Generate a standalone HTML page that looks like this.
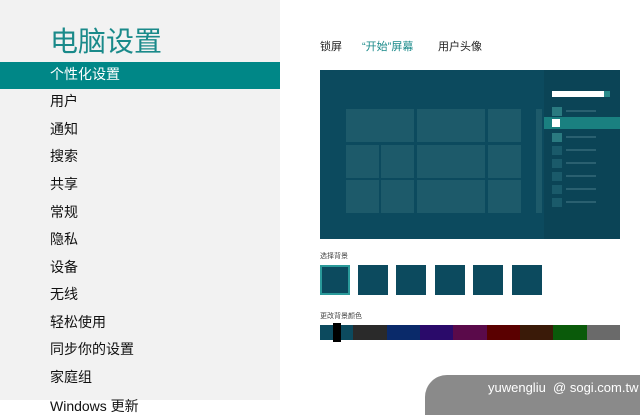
<!DOCTYPE html><html><head><meta charset="utf-8"><style>
body{margin:0;width:640px;height:400px;overflow:hidden;position:relative;background:#fff;font-family:"Liberation Sans","Noto Sans CJK SC",sans-serif}
.l{position:absolute;left:0;top:0;width:280px;height:400px;background:#f2f2f2}
.t{position:absolute;left:50px;top:20px;font-size:28px;color:#1a8a8a}
.sel{position:absolute;left:0;top:62px;width:280px;height:27px;background:#008787}
.i{position:absolute;left:50px;font-size:14px;color:#111;line-height:20px}
.a{position:absolute}
.tile{position:absolute;background:#1d5a6a}
.sq{position:absolute;left:232px;width:10px;height:9px;background:#1a5a6a}
.ln{position:absolute;left:246px;width:30px;height:2px;background:#2a6070}
</style></head><body>
<div class="l"></div>
<div class="t">电脑设置</div>
<div class="sel"></div>
<div class="i" style="top:64px;color:#fff">个性化设置</div>
<div class="i" style="top:91px">用户</div>
<div class="i" style="top:119px">通知</div>
<div class="i" style="top:146px">搜索</div>
<div class="i" style="top:174px">共享</div>
<div class="i" style="top:202px">常规</div>
<div class="i" style="top:229px">隐私</div>
<div class="i" style="top:257px">设备</div>
<div class="i" style="top:284px">无线</div>
<div class="i" style="top:312px">轻松使用</div>
<div class="i" style="top:339px">同步你的设置</div>
<div class="i" style="top:367px">家庭组</div>
<div class="i" style="top:396px">Windows 更新</div>
<div class="a" style="left:320px;top:38px;font-size:11px;color:#222">锁屏</div>
<div class="a" style="left:362px;top:38px;font-size:11px;color:#1a8a8a">“开始”屏幕</div>
<div class="a" style="left:438px;top:38px;font-size:11px;color:#222">用户头像</div>
<div class="a" style="left:320px;top:70px;width:300px;height:169px;background:#0c4a5e;overflow:hidden">
<div class="a" style="left:224px;top:0;width:76px;height:169px;background:#0b4456"></div>
<div class="a" style="left:232px;top:21px;width:52px;height:6px;background:#fff"></div>
<div class="a" style="left:284px;top:21px;width:6px;height:6px;background:#2a8a8a"></div>
<div class="sq" style="top:37px;background:#2a7a80"></div><div class="ln" style="top:40px"></div>
<div class="a" style="left:224px;top:47px;width:76px;height:12px;background:#1a8080"></div>
<div class="a" style="left:232px;top:49px;width:8px;height:8px;background:#fff"></div>
<div class="sq" style="top:63px;background:#2a7a80"></div><div class="ln" style="top:66px"></div>
<div class="sq" style="top:76px"></div><div class="ln" style="top:79px"></div>
<div class="sq" style="top:89px"></div><div class="ln" style="top:92px"></div>
<div class="sq" style="top:102px"></div><div class="ln" style="top:105px"></div>
<div class="sq" style="top:115px"></div><div class="ln" style="top:118px"></div>
<div class="sq" style="top:128px"></div><div class="ln" style="top:131px"></div>
<div class="tile" style="left:26px;top:39px;width:68px;height:33px"></div>
<div class="tile" style="left:97px;top:39px;width:68px;height:33px"></div>
<div class="tile" style="left:168px;top:39px;width:33px;height:33px"></div>
<div class="tile" style="left:26px;top:75px;width:33px;height:33px"></div>
<div class="tile" style="left:61px;top:75px;width:33px;height:33px"></div>
<div class="tile" style="left:97px;top:75px;width:68px;height:33px"></div>
<div class="tile" style="left:168px;top:75px;width:33px;height:33px"></div>
<div class="tile" style="left:26px;top:110px;width:33px;height:33px"></div>
<div class="tile" style="left:61px;top:110px;width:33px;height:33px"></div>
<div class="tile" style="left:97px;top:110px;width:68px;height:33px"></div>
<div class="tile" style="left:168px;top:110px;width:33px;height:33px"></div>
<div class="tile" style="left:216px;top:39px;width:6px;height:104px"></div>
</div>
<div class="a" style="left:320px;top:251px;font-size:7px;color:#444">选择背景</div>
<div class="a" style="left:320px;top:265px;width:26px;height:26px;background:#0c4a5e;border:2px solid #2a9a9a"></div>
<div class="a" style="left:358px;top:265px;width:30px;height:30px;background:#0c4a5e"></div>
<div class="a" style="left:396px;top:265px;width:30px;height:30px;background:#0c4a5e"></div>
<div class="a" style="left:435px;top:265px;width:30px;height:30px;background:#0c4a5e"></div>
<div class="a" style="left:473px;top:265px;width:30px;height:30px;background:#0c4a5e"></div>
<div class="a" style="left:512px;top:265px;width:30px;height:30px;background:#0c4a5e"></div>
<div class="a" style="left:320px;top:311px;font-size:7px;color:#444">更改背景颜色</div>
<div class="a" style="left:320px;top:325px;width:300px;height:15px;display:flex">
<div style="flex:1;background:#0c4a5e"></div><div style="flex:1;background:#2a2a2a"></div><div style="flex:1;background:#0a2a6a"></div><div style="flex:1;background:#2a0a6a"></div><div style="flex:1;background:#5a0a4a"></div><div style="flex:1;background:#5a0000"></div><div style="flex:1;background:#3a1a08"></div><div style="flex:1;background:#0a5a0a"></div><div style="flex:1;background:#6a6a6a"></div></div>
<div class="a" style="left:333px;top:323px;width:8px;height:19px;background:#000"></div>
<div class="a" style="left:425px;top:375px;width:230px;height:40px;background:#8a8a8a;border-radius:22px 0 0 0"></div>
<div class="a" style="left:488px;top:380px;font-size:13px;color:#fff">yuwengliu&nbsp;&nbsp;@ sogi.com.tw</div>
</body></html>
